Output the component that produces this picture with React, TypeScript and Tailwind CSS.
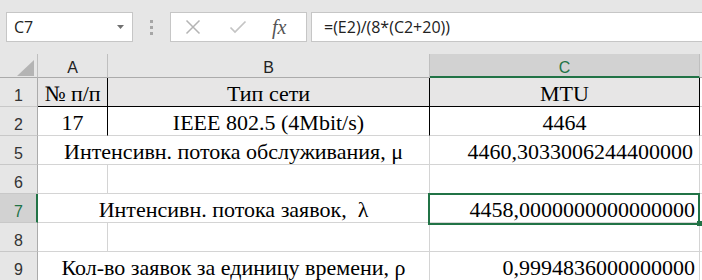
import React from "react";

function RowHdr({ n, sel }: { n: string; sel?: boolean }) {
  return (
    <div
      className={
        sel
          ? "w-[38px] shrink-0 bg-[#d2d2d2] border-r-2 border-r-[#217346] border-b border-b-[#c8c8c8] flex items-end justify-center pb-[2px] pl-[1px] text-[16px] leading-[16px] text-[#217346]"
          : "w-[38px] shrink-0 bg-[#e6e6e6] border-r border-r-[#ababab] border-b border-b-[#c8c8c8] flex items-end justify-center pb-[2px] text-[16px] leading-[16px] text-[#333]"
      }
    >
      {n}
    </div>
  );
}

function Cell({ className, children }: { className: string; children?: React.ReactNode }) {
  return (
    <div
      className={
        "shrink-0 flex items-end pb-[1px] text-[22px] leading-[22px] text-black whitespace-pre font-['Liberation_Serif',serif] " +
        className
      }
    >
      {children}
    </div>
  );
}

export default function App() {
  return (
    <div className="w-[702px] h-[280px] overflow-hidden bg-white flex flex-col font-['Liberation_Sans',sans-serif]">
      {/* toolbar */}
      <div className="h-[54px] shrink-0 bg-[#e6e6e6] flex items-start pt-[12px] pl-[6px]">
        <div className="w-[127px] h-[30px] shrink-0 bg-white border border-[#c6c6c6] flex items-center justify-between pl-[7px] pr-[8px]">
          <span className="text-[16px] text-[#222] font-['Open_Sans',sans-serif]">C7</span>
          <svg width="7" height="4" viewBox="0 0 7 4">
            <path d="M0 0H7L3.5 4Z" fill="#707070" />
          </svg>
        </div>
        <div className="ml-[17px] mt-[8px] flex flex-col gap-[3px] shrink-0">
          <div className="w-[3px] h-[3px] bg-[#a6a6a6]" />
          <div className="w-[3px] h-[3px] bg-[#a6a6a6]" />
          <div className="w-[3px] h-[3px] bg-[#a6a6a6]" />
        </div>
        <div className="ml-[17px] w-[137px] h-[30px] shrink-0 bg-white border border-[#c6c6c6] flex items-center">
          <svg className="ml-[14px]" width="16" height="16" viewBox="0 0 16 16">
            <path d="M1.5 1.5L14.5 14.5M14.5 1.5L1.5 14.5" stroke="#b4b4b4" strokeWidth="1.5" fill="none" />
          </svg>
          <svg className="ml-[28px]" width="18" height="16" viewBox="0 0 18 16">
            <path d="M1.5 8.5L6 13L16.5 2.5" stroke="#c4c4c4" strokeWidth="1.7" fill="none" />
          </svg>
          <span className="ml-[25px] text-[20px] italic text-[#555] font-['Liberation_Serif',serif] leading-none">
            fx
          </span>
        </div>
        <div className="ml-[4px] flex-1 h-[30px] bg-white border border-[#c6c6c6] border-r-0 flex items-center pl-[12px]">
          <span className="text-[16px] text-[#222] font-['Open_Sans',sans-serif]">=(E2)/(8*(C2+20))</span>
        </div>
      </div>

      {/* column header */}
      <div className="h-[24px] shrink-0 flex bg-[#e6e6e6]">
        <div className="w-[38px] shrink-0 border-r border-r-[#bfbfbf] border-b border-b-[#ababab] flex items-end justify-end pr-[2px] pb-[1px]">
          <svg width="18" height="16" viewBox="0 0 18 16">
            <path d="M17 0V16H0Z" fill="#b4b4b4" />
          </svg>
        </div>
        <div className="w-[70px] shrink-0 border-r border-r-[#bfbfbf] border-b border-b-[#ababab] flex items-end justify-center pb-[1px] text-[16px] leading-[16px] text-[#222]">
          A
        </div>
        <div className="w-[322px] shrink-0 border-r border-r-[#bfbfbf] border-b border-b-[#ababab] flex items-end justify-center pb-[1px] text-[16px] leading-[16px] text-[#222]">
          B
        </div>
        <div className="w-[270px] shrink-0 bg-[#d2d2d2] border-r border-r-[#bfbfbf] border-b-2 border-b-[#217346] flex items-end justify-center text-[16px] leading-[16px] text-[#217346]">
          C
        </div>
        <div className="flex-1 border-b border-b-[#ababab]" />
      </div>

      {/* row 1 */}
      <div className="h-[29px] shrink-0 flex">
        <RowHdr n="1" />
        <Cell className="w-[70px] justify-center bg-[#e7e6e6] border-r border-b border-black">№ п/п</Cell>
        <Cell className="w-[322px] justify-center bg-[#e7e6e6] border-r border-b border-black">Тип сети</Cell>
        <Cell className="w-[270px] justify-center bg-[#e7e6e6] border-r border-b border-black">MTU</Cell>
        <div className="flex-1 border-b border-b-[#d4d4d4]" />
      </div>

      {/* row 2 */}
      <div className="h-[29px] shrink-0 flex">
        <RowHdr n="2" />
        <Cell className="w-[70px] justify-center border-r border-r-black border-b border-b-[#d4d4d4]">17</Cell>
        <Cell className="w-[322px] justify-center border-r border-r-black border-b border-b-[#d4d4d4]">IEEE 802.5 (4Mbit/s)</Cell>
        <Cell className="w-[270px] justify-center border-r border-r-black border-b border-b-[#d4d4d4]">4464</Cell>
        <div className="flex-1 border-b border-b-[#d4d4d4]" />
      </div>

      {/* row 5 */}
      <div className="h-[29px] shrink-0 flex">
        <RowHdr n="5" />
        <Cell className="w-[392px] justify-center border-r border-b border-[#d4d4d4]">Интенсивн. потока обслуживания, μ</Cell>
        <Cell className="w-[270px] justify-end pr-[6px] border-r border-b border-[#d4d4d4]">4460,3033006244400000</Cell>
        <div className="flex-1 border-b border-b-[#d4d4d4]" />
      </div>

      {/* row 6 */}
      <div className="h-[29px] shrink-0 flex">
        <RowHdr n="6" />
        <Cell className="w-[70px] border-r border-b border-[#d4d4d4]" />
        <Cell className="w-[322px] border-r border-b border-[#d4d4d4]" />
        <Cell className="w-[270px] border-r border-b border-[#d4d4d4]" />
        <div className="flex-1 border-b border-b-[#d4d4d4]" />
      </div>

      {/* row 7 */}
      <div className="h-[29px] shrink-0 flex relative z-10">
        <RowHdr n="7" sel />
        <Cell className="w-[392px] justify-center border-r border-b border-[#d4d4d4]">Интенсивн. потока заявок,  λ</Cell>
        <Cell className="w-[270px] justify-end pr-[4px] border-r border-b border-[#d4d4d4] relative">
          4458,0000000000000000
          <div className="absolute left-[-2px] top-[-1px] right-[-1px] bottom-[-3px] border-2 border-[#217346]" />
          <div className="absolute right-[-3px] bottom-[-4px] w-[5px] h-[5px] bg-[#217346]" />
        </Cell>
        <div className="flex-1 border-b border-b-[#d4d4d4]" />
      </div>

      {/* row 8 */}
      <div className="h-[29px] shrink-0 flex">
        <RowHdr n="8" />
        <Cell className="w-[70px] border-r border-b border-[#d4d4d4]" />
        <Cell className="w-[322px] border-r border-b border-[#d4d4d4]" />
        <Cell className="w-[270px] border-r border-b border-[#d4d4d4]" />
        <div className="flex-1 border-b border-b-[#d4d4d4]" />
      </div>

      {/* row 9 */}
      <div className="h-[29px] shrink-0 flex">
        <RowHdr n="9" />
        <Cell className="w-[392px] justify-center border-r border-b border-[#d4d4d4]">Кол-во заявок за единицу времени, ρ</Cell>
        <Cell className="w-[270px] justify-end pr-[4px] border-r border-b border-[#d4d4d4]">0,9994836000000000</Cell>
        <div className="flex-1 border-b border-b-[#d4d4d4]" />
      </div>
    </div>
  );
}
